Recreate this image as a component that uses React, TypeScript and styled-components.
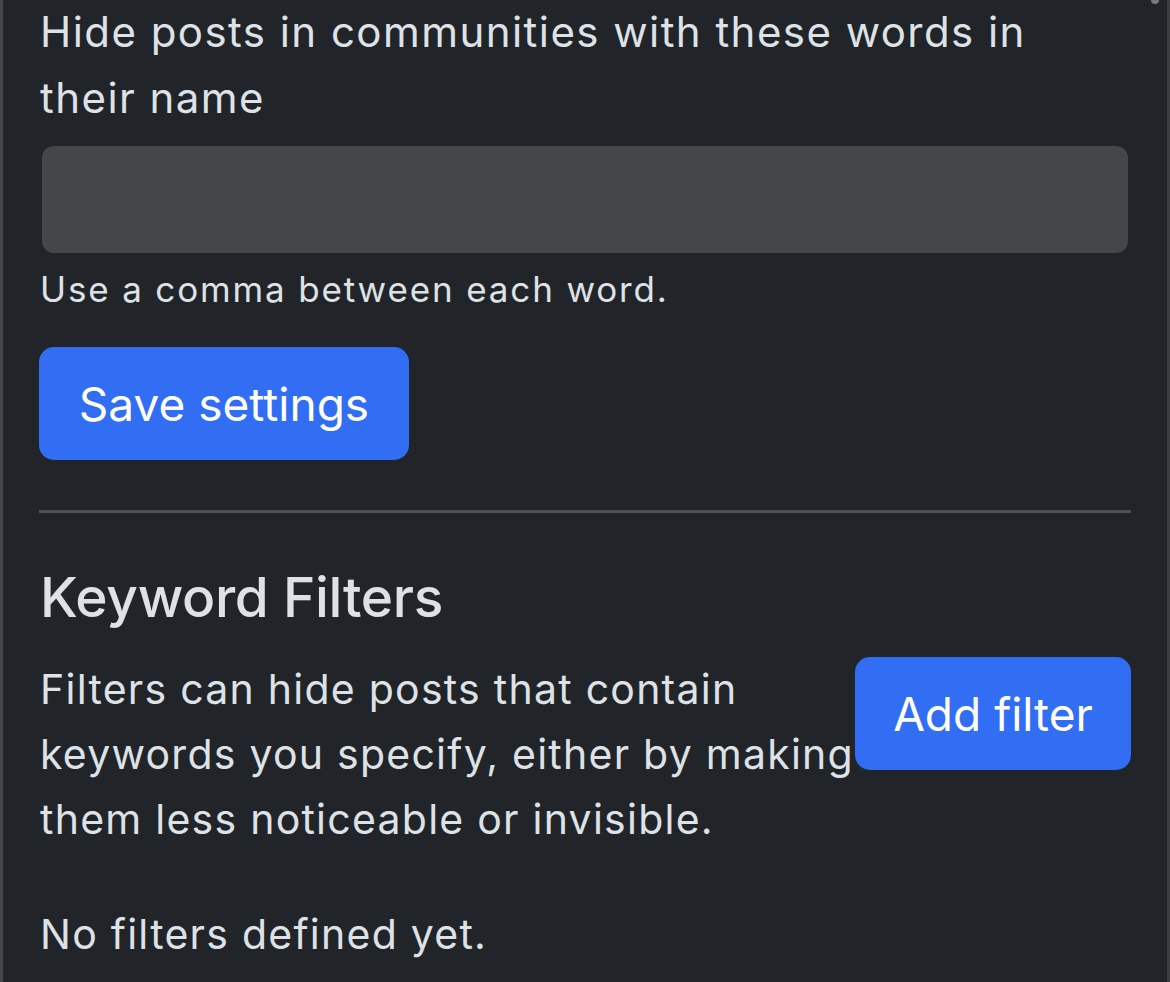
import React from "react";
import styled, { createGlobalStyle } from "styled-components";

const Global = createGlobalStyle`
  html, body {
    margin: 0;
    padding: 0;
    background: #212529;
    overflow: hidden;
  }
  * { box-sizing: border-box; }
`;

const Panel = styled.main`
  position: relative;
  min-height: 100vh;
  height: 982px;
  overflow: hidden;
  background: #212529;
  border-left: 3px solid #46474b;
  border-right: 3px solid #3b3c40;
  padding: 0 36px 0 37px;
  color: #dee2e6;
  font-family: Inter, "Liberation Sans", sans-serif;
  display: flex;
  flex-direction: column;
`;

const ScrollThumb = styled.div`
  position: absolute;
  top: -4px;
  right: 8px;
  width: 8px;
  height: 8px;
  border-radius: 4px;
  background: #77787c;
`;

const Label = styled.label`
  display: block;
  margin-top: -1px;
  font-size: 42px;
  line-height: 66px;
  letter-spacing: 1.45px;
`;

const TextInput = styled.input`
  display: block;
  margin: 15px 0 0 2px;
  width: 1086px;
  height: 107px;
  border: none;
  border-radius: 12px;
  background: #45464a;
  outline: none;
`;

const HelpText = styled.div`
  margin-top: 10px;
  font-size: 35px;
  line-height: 52px;
  letter-spacing: 1.85px;
  color: #dee2e6;
`;

const Button = styled.button<{ $width: number }>`
  flex-shrink: 0;
  width: ${(p) => p.$width}px;
  height: 113px;
  border: none;
  border-radius: 15px;
  background: #316ef4;
  color: #ffffff;
  font-family: Inter, "Liberation Sans", sans-serif;
  font-size: 46px;
  padding: 0;
  cursor: pointer;
`;

const SaveRow = styled.div`
  margin-top: 32px;
  margin-left: -1px;
  display: flex;
`;

const Divider = styled.hr`
  margin: 50px 0 0 -1px;
  border: none;
  height: 3px;
  background: #4c4f54;
`;

const Heading = styled.h2`
  margin: 49px 0 0;
  font-size: 55px;
  font-weight: 500;
  line-height: 70px;
  letter-spacing: -0.3px;
`;

const FilterRow = styled.div`
  margin-top: 25px;
  display: flex;
  align-items: flex-start;
`;

const Description = styled.p`
  flex: 1;
  margin: 0;
  font-size: 41px;
  line-height: 65px;
  letter-spacing: 1.25px;
`;

const Empty = styled.p`
  margin: 50px 0 0;
  font-size: 41px;
  line-height: 65px;
  letter-spacing: 1.25px;
`;

export default function App() {
  return (
    <>
      <Global />
      <Panel>
        <ScrollThumb />
        <Label htmlFor="words">Hide posts in communities with these words in their name</Label>
        <TextInput id="words" type="text" />
        <HelpText>Use a comma between each word.</HelpText>
        <SaveRow>
          <Button $width={370}>Save settings</Button>
        </SaveRow>
        <Divider />
        <Heading>Keyword Filters</Heading>
        <FilterRow>
          <Description>
            Filters can hide posts that contain keywords you specify, either by making them less
            noticeable or invisible.
          </Description>
          <Button $width={276}>Add filter</Button>
        </FilterRow>
        <Empty>No filters defined yet.</Empty>
      </Panel>
    </>
  );
}
